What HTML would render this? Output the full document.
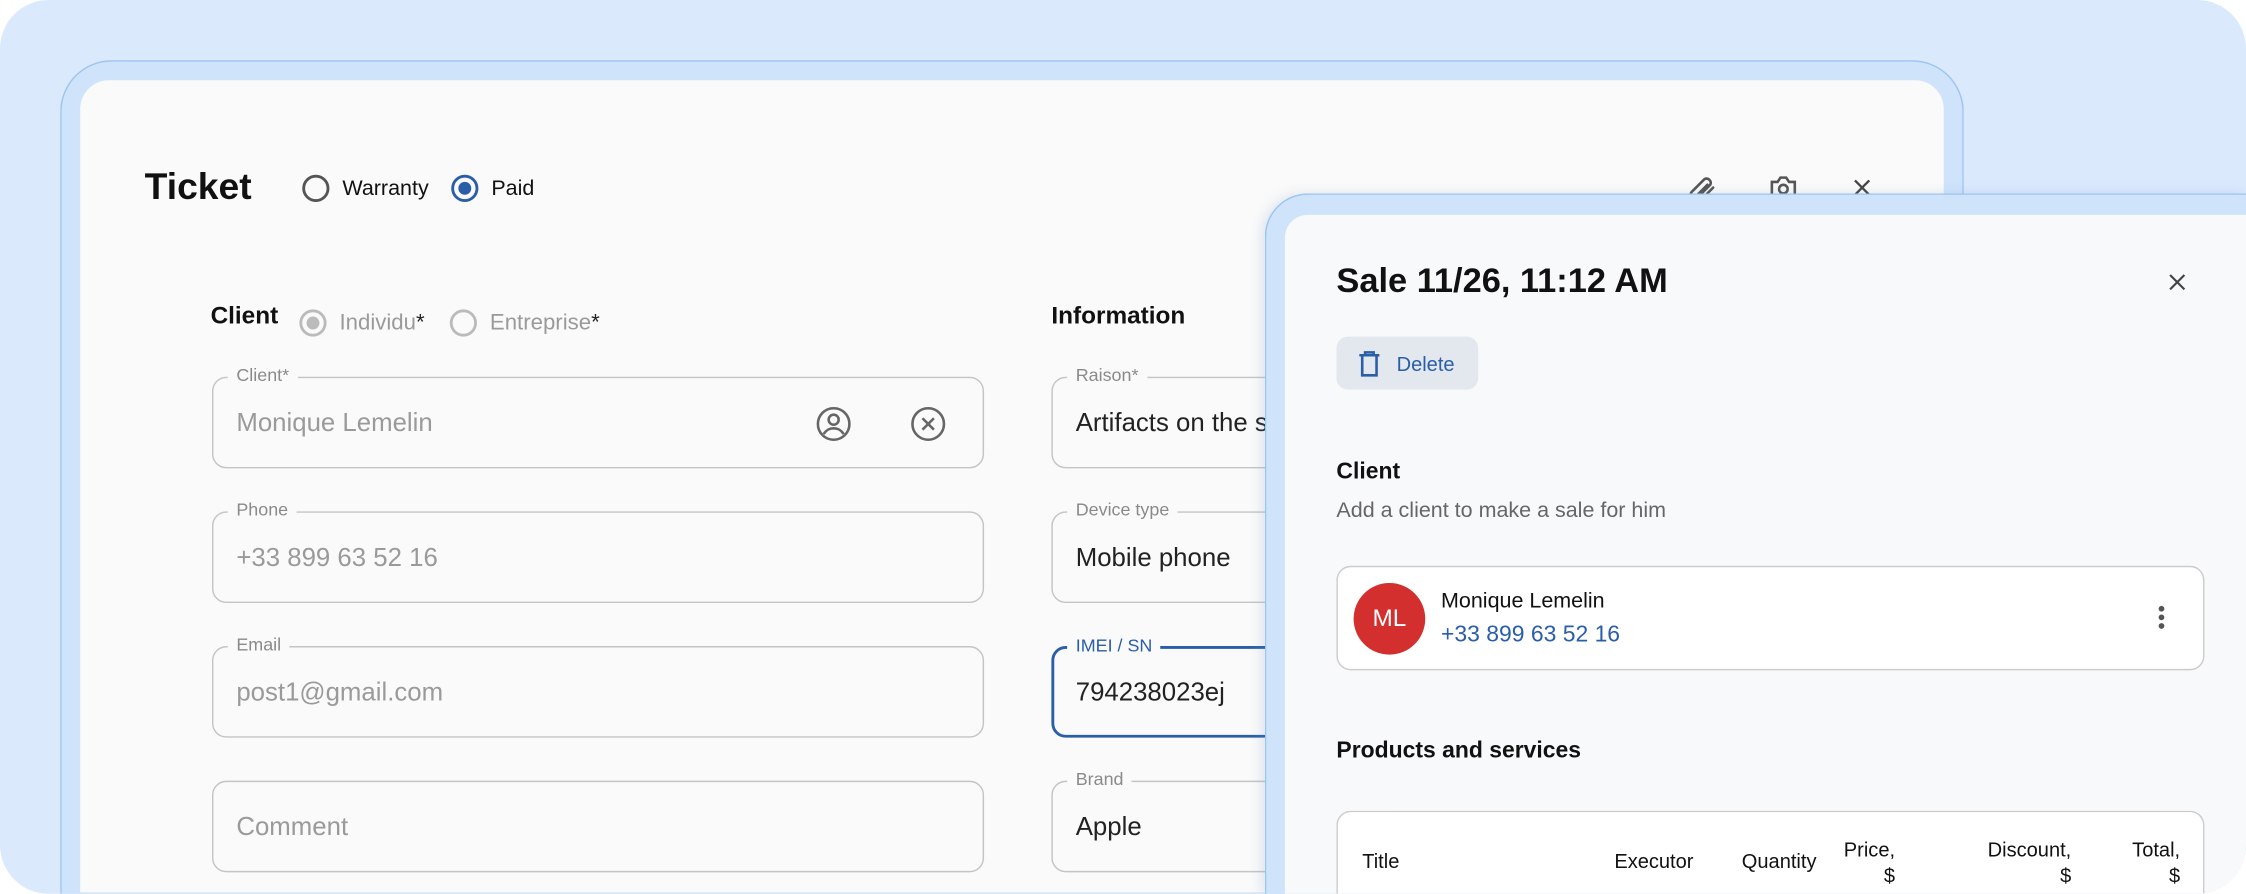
<!DOCTYPE html>
<html><head><meta charset="utf-8"><style>
*{box-sizing:border-box;margin:0;padding:0}
html,body{width:2246px;height:894px;overflow:hidden;background:#fff}
#s{position:absolute;left:0;top:0;width:1568px;height:624px;overflow:hidden;transform:scale(1.43240);transform-origin:0 0;font-family:"Liberation Sans",sans-serif;color:#111}
.bg{position:absolute;left:0;top:0;width:1568px;height:624px;background:#dbe9fd;border-radius:34px;overflow:hidden}
.abs{position:absolute}
.frame{background:#cfe3fb;border:1.5px solid #9cc5f0;border-bottom:none}
.field{position:absolute;border:1.3px solid #c4c4c4;border-radius:10px;height:64px}
.field .lab{position:absolute;top:-9px;left:10px;background:#fafafa;padding:0 6px;font-size:12.5px;color:#8a8a8a}
.field .val{position:absolute;left:16px;top:21px;font-size:18px;color:#9a9a9a}
.field .val.dk{color:#222}
.radio{position:absolute;width:19px;height:19px;border-radius:50%;border:2px solid #555}
</style></head><body><div id="s"><div class="bg">
<div class="abs frame" style="left:42px;top:42px;width:1329px;height:582px;border-radius:36px 36px 0 0"></div>
<div class="abs" style="left:56px;top:56px;width:1301px;height:567px;background:#fafafa;border-radius:20px 20px 0 0"></div>
<div class="abs" style="left:101px;top:115px;font-size:26px;font-weight:bold">Ticket</div>
<div class="radio" style="left:211px;top:122px"></div>
<div class="abs" style="left:239px;top:123px;font-size:15px">Warranty</div>
<div class="radio" style="left:315px;top:122px;border-color:#2a5ea8"><div style="position:absolute;left:3px;top:3px;width:9px;height:9px;border-radius:50%;background:#2a5ea8"></div></div>
<div class="abs" style="left:343px;top:123px;font-size:15px">Paid</div>
<svg class="abs" style="left:1177px;top:119px" width="24" height="24" viewBox="0 0 24 24" fill="none" stroke="#555" stroke-width="1.8" stroke-linecap="round"><path d="M8 19l9-9a3 3 0 0 0-4-4l-9 9a2 2 0 0 0 3 3l8-8"/><path d="M11 20l8-8"/></svg>
<svg class="abs" style="left:1233px;top:119px" width="24" height="24" viewBox="0 0 24 24" fill="none" stroke="#555" stroke-width="1.8"><path d="M4 8h4l2-3h4l2 3h4v11H4z"/><circle cx="12" cy="13" r="3"/></svg>
<svg class="abs" style="left:1292px;top:123px" width="16" height="16" viewBox="0 0 16 16" stroke="#444" stroke-width="1.6"><path d="M3 3l10 10M13 3L3 13"/></svg>

<div class="abs" style="left:147px;top:211px;font-size:17px;font-weight:bold">Client</div>
<div class="radio" style="left:209px;top:216px;border-color:#bbb"><div style="position:absolute;left:3px;top:3px;width:9px;height:9px;border-radius:50%;background:#bbb"></div></div>
<div class="abs" style="left:237px;top:217px;font-size:15.5px;color:#9a9a9a">Individu<span style="color:#222">*</span></div>
<div class="radio" style="left:314px;top:216px;border-color:#bbb"></div>
<div class="abs" style="left:342px;top:217px;font-size:15.5px;color:#9a9a9a">Entreprise<span style="color:#222">*</span></div>

<div class="field" style="left:148px;top:263px;width:539px"><div class="lab">Client*</div><div class="val">Monique Lemelin</div>
<svg class="abs" style="left:420px;top:19px" width="26" height="26" viewBox="0 0 26 26" fill="none" stroke="#666" stroke-width="1.8"><circle cx="13" cy="13" r="11"/><circle cx="13" cy="10" r="3.5"/><path d="M6 20c2-3 4-4 7-4s5 1 7 4"/></svg>
<svg class="abs" style="left:486px;top:19px" width="26" height="26" viewBox="0 0 26 26" fill="none" stroke="#666" stroke-width="1.8"><circle cx="13" cy="13" r="11"/><path d="M9 9l8 8M17 9l-8 8"/></svg></div>
<div class="field" style="left:148px;top:357px;width:539px"><div class="lab">Phone</div><div class="val">+33 899 63 52 16</div></div>
<div class="field" style="left:148px;top:451px;width:539px"><div class="lab">Email</div><div class="val">post1@gmail.com</div></div>
<div class="field" style="left:148px;top:545px;width:539px"><div class="val">Comment</div></div>

<div class="abs" style="left:734px;top:211px;font-size:17px;font-weight:bold">Information</div>
<div class="field" style="left:734px;top:263px;width:400px"><div class="lab">Raison*</div><div class="val dk">Artifacts on the screen</div></div>
<div class="field" style="left:734px;top:357px;width:400px"><div class="lab">Device type</div><div class="val dk">Mobile phone</div></div>
<div class="field" style="left:734px;top:451px;width:400px;border:2px solid #2a5ea8"><div class="lab" style="color:#2a5ea8;left:9px">IMEI / SN</div><div class="val dk" style="left:15px;top:20px">794238023ej</div></div>
<div class="field" style="left:734px;top:545px;width:400px"><div class="lab">Brand</div><div class="val dk">Apple</div></div>

<div class="abs frame" style="left:883px;top:135px;width:685px;height:489px;border-radius:30px 0 0 0;border-right:none;box-shadow:-3px 0 8px rgba(120,150,200,.2)"></div>
<div class="abs" style="left:897px;top:150px;width:671px;height:474px;background:#f8f9fb;border-radius:16px 0 0 0"></div>
<div class="abs" style="left:933px;top:183px;font-size:24px;font-weight:bold">Sale 11/26, 11:12 AM</div>
<svg class="abs" style="left:1513px;top:190px" width="14" height="14" viewBox="0 0 14 14" stroke="#444" stroke-width="1.5"><path d="M2 2l10 10M12 2L2 12"/></svg>
<div class="abs" style="left:933px;top:235px;width:99px;height:37px;background:#e3e7ee;border-radius:8px"></div>
<svg class="abs" style="left:947px;top:244px" width="18" height="20" viewBox="0 0 18 20" fill="none" stroke="#2a5ea8" stroke-width="1.8"><path d="M2 4h14M6 4V2h6v2M4 4v14h10V4"/></svg>
<div class="abs" style="left:975px;top:246px;font-size:14px;color:#2a5ea8">Delete</div>
<div class="abs" style="left:933px;top:321px;font-size:16px;font-weight:bold">Client</div>
<div class="abs" style="left:933px;top:348px;font-size:15px;color:#666">Add a client to make a sale for him</div>
<div class="abs" style="left:933px;top:395px;width:606px;height:73px;background:#fff;border:1.3px solid #ccc;border-radius:10px"></div>
<div class="abs" style="left:945px;top:407px;width:50px;height:50px;border-radius:50%;background:#d32f2f;color:#fff;font-size:17px;text-align:center;line-height:50px">ML</div>
<div class="abs" style="left:1006px;top:411px;font-size:15px">Monique Lemelin</div>
<div class="abs" style="left:1006px;top:435px;font-size:16px;color:#2a5ea8">+33 899 63 52 16</div>
<div class="abs" style="left:1507px;top:423px;width:4px;height:4px;border-radius:50%;background:#555;box-shadow:0 6px 0 #555,0 12px 0 #555"></div>
<div class="abs" style="left:933px;top:516px;font-size:16px;font-weight:bold">Products and services</div>
<div class="abs" style="left:933px;top:566px;width:606px;height:58px;background:#fff;border:1.3px solid #ccc;border-bottom:none;border-radius:10px 10px 0 0"></div>
<div class="abs" style="left:951px;top:593px;font-size:14px">Title</div>
<div class="abs" style="left:1127px;top:593px;font-size:14px">Executor</div>
<div class="abs" style="left:1216px;top:593px;font-size:14px">Quantity</div>
<div class="abs" style="left:1263px;top:584px;width:60px;font-size:14px;text-align:right;line-height:18px">Price,<br>$</div>
<div class="abs" style="left:1366px;top:584px;width:80px;font-size:14px;text-align:right;line-height:18px">Discount,<br>$</div>
<div class="abs" style="left:1462px;top:584px;width:60px;font-size:14px;text-align:right;line-height:18px">Total,<br>$</div>
</div></div></body></html>
